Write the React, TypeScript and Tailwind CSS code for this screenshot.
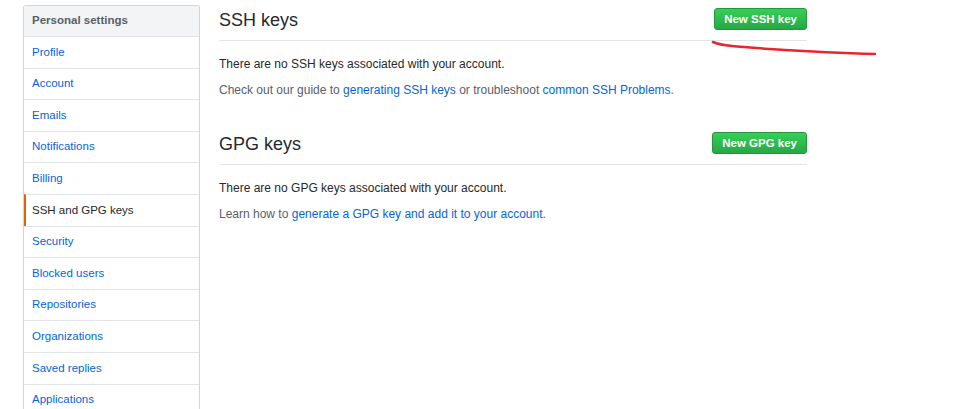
import React from 'react';

const navItems = [
  'Profile',
  'Account',
  'Emails',
  'Notifications',
  'Billing',
  'SSH and GPG keys',
  'Security',
  'Blocked users',
  'Repositories',
  'Organizations',
  'Saved replies',
  'Applications',
];

const KeySection: React.FC<{
  title: string;
  button: string;
  children: React.ReactNode;
}> = ({ title, button, children }) => (
  <section>
    <div className="flex items-end justify-between border-b border-[#e1e4e8] pb-[8px]">
      <h2 className="text-[18px] leading-[24px] font-normal text-[#24292e]">{title}</h2>
      <button className="mb-[2px] h-[22px] rounded-[3px] border border-[#23953d] bg-gradient-to-b from-[#34d058] to-[#28a745] px-[9px] text-[11.5px] font-bold leading-[20px] text-white">
        {button}
      </button>
    </div>
    <div className="pt-[14px] text-[12px] leading-[18px] text-[#24292e]">{children}</div>
  </section>
);

export default function App() {
  return (
    <div
      className="relative h-[409px] w-[974px] overflow-hidden bg-white"
      style={{ fontFamily: '"Liberation Sans", Arial, sans-serif' }}
    >
      <div className="flex pl-[23px] pt-[5px]">
        {/* Sidebar */}
        <nav className="w-[177px] shrink-0 rounded-t-[3px] border border-b-0 border-[#d1d5da] text-[11.5px]">
          <div className="flex h-[30px] items-center bg-[#f3f4f6] px-[8px] font-bold text-[#586069]">
            Personal settings
          </div>
          {navItems.map((item) => {
            const active = item === 'SSH and GPG keys';
            return (
              <div
                key={item}
                className={
                  active
                    ? 'flex h-[31.6px] items-center border-t border-[#e1e4e8] border-l-2 border-l-[#e36209] pl-[6px] text-[#24292e]'
                    : 'flex h-[31.6px] items-center border-t border-[#e1e4e8] px-[8px] text-[#0366d6]'
                }
              >
                {item}
              </div>
            );
          })}
        </nav>

        {/* Main */}
        <main className="ml-[19px] w-[588px] pt-[3px]">
          <KeySection title="SSH keys" button="New SSH key">
            <p>There are no SSH keys associated with your account.</p>
            <p className="mt-[8px] text-[#586069]">
              Check out our guide to{' '}
              <a className="text-[#0366d6]">generating SSH keys</a> or troubleshoot{' '}
              <a className="text-[#0366d6]">common SSH Problems</a>.
            </p>
          </KeySection>
          <div className="h-[33px]" />
          <KeySection title="GPG keys" button="New GPG key">
            <p>There are no GPG keys associated with your account.</p>
            <p className="mt-[8px] text-[#586069]">
              Learn how to <a className="text-[#0366d6]">generate a GPG key and add it to your account</a>.
            </p>
          </KeySection>
        </main>
      </div>

      {/* hand-drawn red mark */}
      <svg className="pointer-events-none absolute left-0 top-0" width="974" height="409">
        <path
          d="M713 42 C 722 46, 740 47, 770 49 S 830 53, 875 54"
          fill="none"
          stroke="#e8262c"
          strokeWidth="2.5"
          strokeLinecap="round"
        />
      </svg>
    </div>
  );
}
